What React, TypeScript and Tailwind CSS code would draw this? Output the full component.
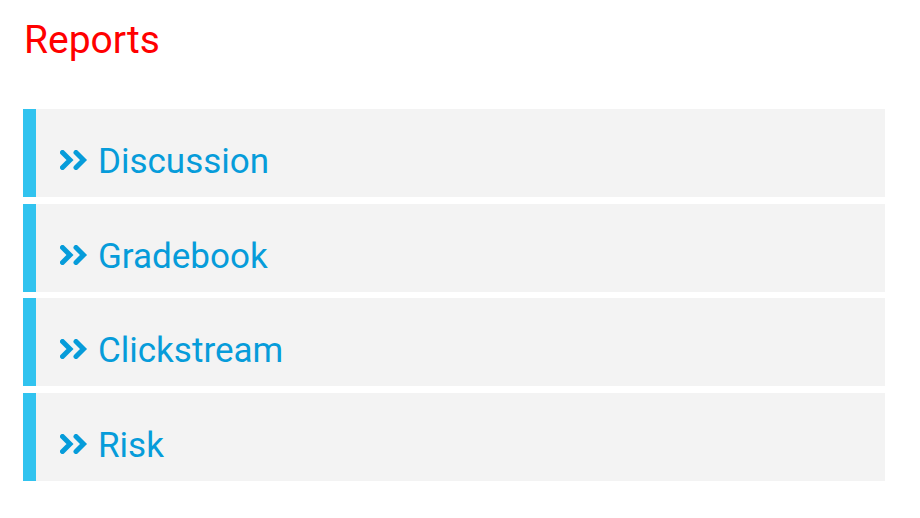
import React from "react";

const items = ["Discussion", "Gradebook", "Clickstream", "Risk"];

function Chevrons() {
  return (
    <svg width="28" height="20" viewBox="0 0 28 20" className="shrink-0 mt-[9px]">
      <path d="M2.5 2.5 L10 10 L2.5 17.5" fill="none" stroke="#069cda" strokeWidth="5" strokeLinejoin="miter" strokeLinecap="round" />
      <path d="M16 2.5 L23.5 10 L16 17.5" fill="none" stroke="#069cda" strokeWidth="5" strokeLinejoin="miter" strokeLinecap="round" />
    </svg>
  );
}

export default function App() {
  return (
    <div className="w-[920px] h-[518px] bg-white" style={{ fontFamily: "Roboto, sans-serif" }}>
      <div className="pl-[24px] pt-[17px]">
        <h1 className="text-[39px] leading-[46px] text-[#ff0000] font-normal">Reports</h1>
      </div>
      <div className="ml-[23px] w-[862px] mt-[46px] flex flex-col gap-[6.67px]">
        {items.map((t) => (
          <div key={t} className="h-[88px] flex bg-[#f3f3f3]">
            <div className="w-[13px] bg-[#31c3ef]" />
            <div className="flex items-start pl-[24px] pt-[32px] gap-[10px]">
              <Chevrons />
              <span className="text-[35px] leading-[42px] text-[#069cda]">{t}</span>
            </div>
          </div>
        ))}
      </div>
    </div>
  );
}
